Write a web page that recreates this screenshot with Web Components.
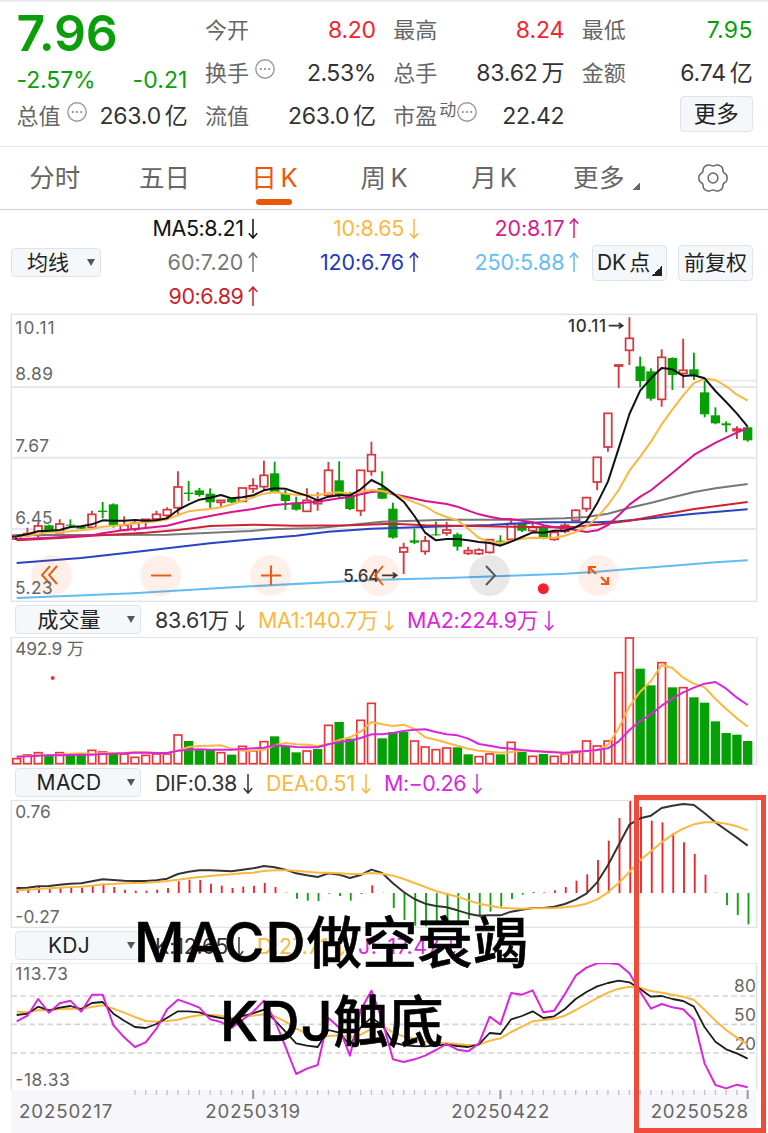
<!DOCTYPE html>
<html lang="zh-CN">
<head>
<meta charset="UTF-8">
<title>日K</title>
<style>
    body {
        margin: 0;
        width: 768px;
        height: 1133px;
        overflow: hidden;
        background: #fff;
        color: #333;
        font-family: Inter, "Noto Sans CJK SC", sans-serif;
    }
</style>
</head>
<body>
<stock-page></stock-page>

<script>
// ---------- helpers ----------
class BaseElement extends HTMLElement {
    connectedCallback() {
        if (this.shadowRoot) return;
        this.attachShadow({ mode: 'open' });
        this.shadowRoot.innerHTML = this.render();
        this.ready();
    }
    attr(name, fallback = '') {
        return this.getAttribute(name) || fallback;
    }
    ready() {}
}

// Text that is tracked in or out until it takes up "w" pixels
class FitText extends BaseElement {
    render() {
        return `<style>
            :host { display: inline-block; white-space: pre; }
            span { display: inline-block; word-spacing: -2.5px; }
        </style><span><slot></slot></span>`;
    }
    ready() {
        const span = this.shadowRoot.querySelector('span');
        const gap = (Number(this.attr('w')) - span.getBoundingClientRect().width) / this.textContent.length;
        span.style.letterSpacing = gap.toFixed(3) + 'px';
    }
}
customElements.define('fit-text', FitText);

class TrendArrow extends BaseElement {
    render() {
        const flip = this.attr('dir') === 'up' ? 'transform="rotate(180 5 10.5)"' : '';
        return `<style>
            :host { display: inline-block; width: 10px; height: 21px; }
            svg { display: block; }
        </style>
        <svg width="10" height="21"><path ${flip} d="M5 1V20M.8 15.2L5 20L9.2 15.2" fill="none" stroke="currentColor" stroke-width="1.5"/></svg>`;
    }
}
customElements.define('trend-arrow', TrendArrow);

// value + arrow in one colour
class TrendValue extends BaseElement {
    render() {
        return `<style>
            :host { display: flex; align-items: center; font-size: 21.5px; line-height: 33px; white-space: nowrap; }
            trend-arrow { margin-left: var(--arrow-gap, 4.5px); }
        </style>
        <fit-text w="${this.attr('w')}">${this.attr('text')}</fit-text><trend-arrow dir="${this.attr('dir')}"></trend-arrow>`;
    }
}
customElements.define('trend-value', TrendValue);

class MoreDots extends BaseElement {
    render() {
        return `<style>:host { display: inline-block; width: 20px; height: 20px; } svg { display: block; }</style>
        <svg width="20" height="20"><circle cx="10" cy="10" r="9.2" fill="none" stroke="#999" stroke-width="1.4"/>
        <g fill="#888"><circle cx="5.8" cy="10" r="1.1"/><circle cx="10" cy="10" r="1.1"/><circle cx="14.2" cy="10" r="1.1"/></g></svg>`;
    }
}
customElements.define('more-dots', MoreDots);

// ---------- header ----------
class QuoteCell extends BaseElement {
    render() {
        return `<style>
            :host { display: flex; height: 43px; line-height: 43px; font-size: 22px; justify-content: space-between; white-space: nowrap; }
            .label { display: flex; color: #666; }
            .value { font-size: 23px; color: #333; }
            :host([tone="up"]) .value { color: #f5222d; }
            :host([tone="down"]) .value { color: #0a9f0a; }
            more-dots { margin: 7px 0 0 6px; }
            small { font-size: 17px; line-height: 31px; margin-left: 2px; }
            small + more-dots { margin-left: 1px; }
        </style>
        <span class="label">${this.attr('label')}${this.hasAttribute('sup') ? `<small>${this.attr('sup')}</small>` : ''}${this.hasAttribute('dots') ? '<more-dots></more-dots>' : ''}</span>
        <fit-text class="value" w="${this.attr('w')}">${this.attr('value')}</fit-text>`;
    }
}
customElements.define('quote-cell', QuoteCell);

class StockQuote extends BaseElement {
    render() {
        return `<style>
            :host {
                display: grid;
                grid-template-columns: repeat(4, 171px);
                column-gap: 17.4px;
                box-sizing: border-box;
                height: 147px;
                padding: 7px 0 0 16.5px;
                border-top: 2px solid #ebebeb;
                border-bottom: 1px solid #e8e8e8;
            }
            .price { height: 51px; line-height: 49px; font-size: 50px; font-weight: 600; }
            .change { display: flex; justify-content: space-between; height: 35px; line-height: 41px; font-size: 23px; }
            .main { color: #0a9f0a; }
            .more {
                float: right;
                box-sizing: border-box;
                width: 73px; height: 36px; line-height: 34px;
                margin-top: 1px;
                border: 1px solid #e0e4ea; border-radius: 4px;
                background: #f5f8fa;
                color: #222; font-size: 22.5px; text-align: center;
            }
        </style>
        <div class="main">
            <div class="price"><fit-text w="101">7.96</fit-text></div>
            <div class="change"><fit-text w="79">-2.57%</fit-text><fit-text w="55">-0.21</fit-text></div>
            <quote-cell label="总值" dots value="263.0 亿" w="88"></quote-cell>
        </div>
        <div>
            <quote-cell label="今开" value="8.20" w="48" tone="up"></quote-cell>
            <quote-cell label="换手" dots value="2.53%" w="69"></quote-cell>
            <quote-cell label="流值" value="263.0 亿" w="88"></quote-cell>
        </div>
        <div>
            <quote-cell label="最高" value="8.24" w="48.5" tone="up"></quote-cell>
            <quote-cell label="总手" value="83.62 万" w="88"></quote-cell>
            <quote-cell label="市盈" sup="动" dots value="22.42" w="62"></quote-cell>
        </div>
        <div>
            <quote-cell label="最低" value="7.95" w="46" tone="down"></quote-cell>
            <quote-cell label="金额" value="6.74 亿" w="72.5"></quote-cell>
            <div class="more">更多</div>
        </div>`;
    }
}
customElements.define('stock-quote', StockQuote);

// ---------- period tabs ----------
class PeriodTabs extends BaseElement {
    // six wide lobes with narrow dips between them
    gear() {
        let d = '';
        for (let a = 0; a < 360; a += 5) {
            const t = a * Math.PI / 180;
            const r = 14.1 - 2.2 * ((1 - Math.cos(6 * t)) / 2) ** 2;
            d += (a ? 'L' : 'M') + (15 + r * Math.cos(t)).toFixed(2) + ' ' + (15 + r * Math.sin(t)).toFixed(2);
        }
        return `<svg width="30" height="30" fill="none" stroke="#666" stroke-width="1.5"><path d="${d}Z"/><circle cx="15" cy="15" r="4.9"/></svg>`;
    }
    render() {
        return `<style>
            :host { display: flex; box-sizing: border-box; height: 63px; border-bottom: 1px solid #cfd1da; color: #666; font-size: 25.5px; line-height: 62px; }
            .tab { flex: 1; display: flex; flex-direction: column; align-items: center; height: 62px; white-space: pre; }
            .active { color: #f0560a; }
            .active::after { content: ''; width: 36px; height: 6px; margin-top: -10px; border-radius: 3px; background: #ec560a; flex: none; }
            .more { flex-direction: row; justify-content: center; }
            .more fit-text { margin-left: 6px; }
            .more i { width: 7px; height: 7px; margin: 17px 0 0 8px; background: linear-gradient(135deg, transparent 50%, #666 50%); }
            .gear { justify-content: center; }
            .gear svg { margin-left: -1px; }
        </style>
        <div class="tab"><fit-text w="51">分时</fit-text></div>
        <div class="tab"><fit-text w="51">五日</fit-text></div>
        <div class="tab active"><fit-text w="46">日 K</fit-text></div>
        <div class="tab"><fit-text w="47">周 K</fit-text></div>
        <div class="tab"><fit-text w="45">月 K</fit-text></div>
        <div class="tab more"><fit-text w="52">更多</fit-text><i></i></div>
        <div class="tab gear">${this.gear()}</div>`;
    }
}
customElements.define('period-tabs', PeriodTabs);

// ---------- moving-average legend ----------
class AverageLegend extends BaseElement {
    render() {
        return `<style>
            :host { display: flex; box-sizing: border-box; height: 100px; padding: 2px 15px 0 11px; }
            .box { box-sizing: border-box; border: 1px solid #e0e4ea; border-radius: 4px; background: #f5f8fa; color: #222; font-size: 21px; }
            .pick { display: flex; align-items: center; justify-content: space-between; width: 90px; height: 29px; margin-top: 36px; padding: 0 5px 0 15px; line-height: 26px; }
            .pick i { border: 4px solid transparent; border-top: 7px solid #555; border-bottom: 0; }
            .grid { display: grid; grid-template-columns: repeat(3, 160.5px); grid-auto-rows: 33.8px; width: 481.5px; margin-left: -3.5px; }
            trend-value { justify-content: flex-end; }
            .tools { display: flex; gap: 11px; margin: 33px 0 0 auto; }
            .tools .box { display: flex; align-items: center; justify-content: center; width: 75px; height: 36px; line-height: 34px; }
            .tools i { align-self: flex-end; width: 10px; height: 10px; margin: 0 0 4px 2px; background: linear-gradient(135deg, transparent 50%, #222 50%); }
        </style>
        <div class="box pick"><fit-text w="42">均线</fit-text><i></i></div>
        <div class="grid">
            <trend-value style="color:#111" text="MA5:8.21" w="91" dir="down"></trend-value>
            <trend-value style="color:#fbb840" text="10:8.65" w="71" dir="down"></trend-value>
            <trend-value style="color:#d91a8c" text="20:8.17" w="70" dir="up"></trend-value>
            <trend-value style="color:#777" text="60:7.20" w="76" dir="up"></trend-value>
            <trend-value style="color:#2238c0" text="120:6.76" w="84" dir="up"></trend-value>
            <trend-value style="color:#66bdf5" text="250:5.88" w="90" dir="up"></trend-value>
            <trend-value style="color:#cb1f2c" text="90:6.89" w="75" dir="up"></trend-value>
        </div>
        <div class="tools">
            <div class="box"><fit-text w="53">DK 点</fit-text><i></i></div>
            <div class="box"><fit-text w="63">前复权</fit-text></div>
        </div>`;
    }
}
customElements.define('average-legend', AverageLegend);

// ---------- indicator bar above each sub chart ----------
class IndicatorBar extends BaseElement {
    render() {
        return `<style>
            :host { display: flex; box-sizing: border-box; height: 35px; padding: 3px 0 0 15px; }
            .pick { box-sizing: border-box; display: flex; align-items: center; justify-content: center; position: relative; width: 126px; height: 29px; padding-right: 18px; border: 1px solid #e0e4ea; border-radius: 4px; background: #f5f8fa; color: #222; font-size: 21px; line-height: 27px; }
            i { position: absolute; right: 5px; top: 10px; border: 4px solid transparent; border-top: 7px solid #555; border-bottom: 0; }
            .values { display: flex; align-items: center; margin-left: 14px; height: 30px; }
            ::slotted(trend-value) { margin-right: 13px; --arrow-gap: 6px; }
        </style>
        <div class="pick"><fit-text w="${this.attr('w')}">${this.attr('name')}</fit-text><i></i></div>
        <div class="values"><slot></slot></div>`;
    }
}
customElements.define('indicator-bar', IndicatorBar);

// ---------- charts: drawn in thirds of a pixel, one candle every 32.25 units ----------
const PITCH = 32.25;
const LEFT = 50;
const RED = '#d4383f';
const GREEN = '#05a005';
const BLACK = '#1c1c1c';
const YELLOW = '#fbb840';
const PURPLE = '#d926dc';
const cx = i => LEFT + i * PITCH;
const curve = (points, color, w = 6) =>
    `<polyline points="${points}" fill="none" stroke="${color}" stroke-width="${w}" stroke-linejoin="round"/>`;
const series = (ys, color, w) => curve(ys.map((y, i) => cx(i).toFixed(1) + ',' + y).join(' '), color, w);
const label = (x, y, w, text, size = 52, fill = '#666', weight = 400) =>
    `<text x="${x}" y="${y}" font-size="${size}" font-weight="${weight}" fill="${fill}" textLength="${w}">${text}</text>`;

class ChartPane extends BaseElement {
    box = '0 0 2304 384';
    render() {
        const h = this.box.split(' ')[3] / 3;
        return `<style>
            :host { display: block; position: relative; height: ${h}px; }
            svg { display: block; }
            text { font-family: Inter, "Noto Sans CJK SC", sans-serif; }
        </style><svg width="768" height="${h}" viewBox="${this.box}">${this.draw()}</svg>${this.extra()}`;
    }
    extra() { return ''; }
}

// colour, high, body top, body bottom, low
const CANDLES = `r675,676,687,688 r653,671,676,680 r640,648,676,686 g644,646,664,666 r628,642,668,669 g628,644,647,652
g648,650,656,658 r602,613,652,655 g576,602,606,625 g580,583,645,653 r619,646,661,664 r634,640,658,664
r627,628,636,654 r602,613,627,635 r592,599,616,628 r484,531,593,619 g513,548,552,573 g534,541,555,560
g535,551,577,594 r570,571,577,590 g564,565,577,580 r533,534,574,575 r505,527,536,549 r452,496,530,539
g455,490,548,550 g540,551,573,600 g560,578,599,602 r535,571,604,605 r547,573,581,602 r456,481,556,558
g454,511,556,563 g546,556,597,600 r480,481,602,618 r395,434,484,497 g484,534,566,567 g578,596,683,686
r698,713,726,792 g656,691,698,702 r678,693,724,734 g635,673,676,677 r635,660,669,677 g668,673,710,722
r710,722,730,735 r715,720,731,735 r688,689,727,731 g676,692,700,707 r625,641,688,690 g640,642,662,666
r640,652,662,664 g649,651,685,688 r665,667,688,692 r640,646,664,670 r598,601,631,632 r560,563,596,605
r441,442,516,541 r309,310,411,425 r164,165,168,234 r22,85,121,165 g140,169,213,232 g175,184,266,272
r118,142,268,290 g142,144,195,240 r86,181,190,234 g128,178,196,210 g213,247,313,322 g292,316,340,343
g334,340,346,367 r349,357,362,387 g350,352,391,395`.split(/\s+/).map(c => [c[0], ...c.slice(1).split(',').map(Number)]);

const MA5 = [679,673,664,662,660,651,649,643,631,632,632,630,632,631,625,600,583,569,563,555,565,562,556,541,535,536,547,557,571,560,556,556,538,510,526,550,575,618,668,691,687,687,691,696,699,707,695,681,667,668,662,662,652,633,580,515,415,312,242,205,174,178,198,196,205,243,276,311,350];
const MA10 = [680,677,672,666,667,664,661,657,650,648,644,640,637,634,628,615,604,600,597,592,583,573,562,551,546,551,554,556,556,549,547,551,545,540,543,551,564,577,589,609,621,631,656,684,696,698,692,686,683,684,683,677,666,650,622,585,540,482,440,395,343,298,256,219,206,210,229,254,272];

class PriceChart extends ChartPane {
    box = '0 0 2304 876';
    draw() {
        const grid = [231, 443, 657].map(y => `<path d="M34 ${y}H2270" stroke="#e6e8f1" stroke-width="6"/>`).join('');
        const candles = CANDLES.map(([c, hi, top, bottom, lo], i) => {
            const x = cx(i);
            if (c === 'g') {
                return `<path d="M${x} ${hi}V${lo}" stroke="${GREEN}" stroke-width="5.6"/><rect x="${x - 14}" y="${top}" width="28" height="${bottom - top}" fill="${GREEN}"/>`;
            }
            return `<path d="M${x} ${hi}V${top}M${x} ${bottom}V${lo}" stroke="${RED}" stroke-width="5.6"/><rect x="${x - 11.5}" y="${top}" width="23" height="${bottom - top}" fill="#fff" stroke="${RED}" stroke-width="5.2"/>`;
        }).join('');
        return `
            <rect x="34" y="13" width="2236" height="861" fill="none" stroke="#e0e2e8" stroke-width="4"/>
            ${grid}<path d="M2095 212H2270" stroke="#e6e8f1" stroke-width="5"/>
            ${candles}
            ${curve('50,864 400,850 750,829 1114,810 1340,804 1530,797 1695,791 1792,785 1889,777 2018,767 2147,757 2243,751', '#62bcf4')}
            ${curve('50,759 243,744 437,722 630,700 760,688 888,677 985,665 1114,656 1340,649 1469,645 1534,641 1631,637 1792,637 1857,634 1954,625 2018,618 2083,611 2243,598', '#2a42c4')}
            ${curve('36,680 50,675 276,675 500,674 600,670 750,663 810,658 953,654 1050,645 1147,635 1244,632 1340,629 1534,629 1694,625 1759,621 1824,611 1889,593 1954,578 2018,562 2083,546 2147,535 2243,522', '#777')}
            ${curve('50,691 179,684 276,677 437,668 534,660 630,648 759,644 888,647 1050,646 1179,641 1276,646 1405,648 1534,650 1654,652 1727,650 1792,644 1889,632 1986,614 2083,597 2243,576', '#cf2230')}
            ${curve('50,688 147,683 276,676 308,670 372,660 437,654 501,647 566,631 630,618 695,606 759,597 792,590 824,585 888,580 953,575 1017,565 1050,561 1082,553 1114,546 1147,544 1179,553 1211,559 1276,573 1340,582 1372,590 1405,602 1437,613 1469,620 1502,626 1534,628 1598,637 1631,646 1663,652 1727,660 1759,666 1792,661 1824,645 1857,615 1889,583 1921,560 1954,540 2018,488 2083,434 2147,398 2212,367 2243,354', '#d9148f')}
            ${series(MA10, YELLOW)}
            ${series(MA5, '#111')}<path d="M36 680H48V690" stroke="#222" stroke-width="5" fill="none"/>
            ${label(46, 72, 118, '10.11')}${label(46, 211, 113, '8.89')}${label(46, 427, 101, '7.67')}${label(46, 641, 112, '6.45')}
            ${label(1704, 67, 114, '10.11', 51, '#333', 500)}
            <path d="M1826 47H1868M1856 39L1868 47L1856 55" fill="none" stroke="#333" stroke-width="5"/>
            ${label(1030, 817, 108, '5.64', 51, '#333', 500)}
            <path d="M1146 796H1190M1178 788L1190 796L1178 804" fill="none" stroke="#333" stroke-width="5"/>
            <circle cx="1630" cy="836" r="16.5" fill="#f5222d"/>`;
    }
    extra() {
        return `<chart-controls></chart-controls>`;
    }
}
customElements.define('price-chart', PriceChart);

// Round pan / zoom buttons floating over the candles
class ChartControls extends BaseElement {
    render() {
        const icons = [
            'M19 11L11 20L19 29M26 11L18 20L26 29',
            'M11 20.5H31',
            'M11 20.5H31M21 10.5V30.5',
            'M24 11L16 20.5L24 30',
            'M17 11L26 20.5L17 30',
            'M12 19V12H19M12 12L19 19M31 22V29H24M31 29L24 22',
        ];
        return `<style>
            :host { position: absolute; left: 31px; top: 244.5px; width: 588px; display: flex; justify-content: space-between; }
            b { width: 41px; height: 41px; border-radius: 50%; background: rgba(240, 86, 10, .09); }
            b:nth-of-type(5) { background: rgba(0, 0, 0, .09); }
            svg { display: block; fill: none; stroke: #ec5a10; stroke-width: 1.9; }
            b:nth-of-type(5) svg { stroke: #555; }
            b:nth-of-type(6) svg { stroke-width: 2.2; margin-left: -1px; }
            span { position: absolute; left: -16px; top: 21.5px; width: 40px; font-size: 17.3px; line-height: 24px; color: #666; }
        </style>
        ${icons.map(d => `<b><svg width="41" height="41"><path d="${d}"/></svg></b>`).join('')}
        <span><fit-text w="38">5.23</fit-text></span>`;
    }
}
customElements.define('chart-controls', ChartControls);

const VOLUME = 'r475 r464 r457 g468 r457 g466 g466 r450 r455 g459 r461 r471 r465 r461 r461 r404 g424 g451 g451 r457 g465 r438 r452 r424 g410 g440 g458 r452 g448 r375 g367 g417 r360 r309 g416 g397 g397 r422 r440 r448 r443 g443 g464 r469 r461 g464 r426 g457 r468 g463 r468 r462 r453 r422 r437 r422 r217 r113 g207 g257 r187 g263 r262 g293 g309 g365 g400 g405 g424'.split(' ');

class VolumeChart extends ChartPane {
    box = '0 111 2304 384';
    draw() {
        const bars = VOLUME.map((v, i) => {
            const y = Number(v.slice(1));
            return v[0] === 'g'
                ? `<rect x="${cx(i) - 14}" y="${y - 1}" width="28" height="${495 - y}" fill="${GREEN}"/>`
                : `<rect x="${cx(i) - 11.5}" y="${y + 1}" width="23" height="${490 - y}" fill="#fff" stroke="#ec3438" stroke-width="5"/>`;
        }).join('');
        return `
            <path d="M34 493V112H2270V493Z" fill="none" stroke="#e0e2e8" stroke-width="4"/>
            ${bars}
            ${series([470,468,466,466,464,461,460,462,460,459,459,456,457,459,459,452,441,438,437,436,446,452,452,449,436,429,433,434,438,433,420,412,395,366,373,378,374,387,412,419,428,437,446,452,455,458,456,452,452,454,455,461,458,453,450,435,385,320,275,243,195,204,233,251,262,297,327,355,380], YELLOW)}
            ${series([470,469,467,466,466,465,464,464,462,461,460,458,458,459,459,452,449,448,449,449,449,447,445,443,436,438,441,442,442,433,426,422,414,403,403,399,393,389,388,396,403,406,416,432,437,443,446,450,453,455,457,458,456,453,450,445,424,390,363,343,317,296,277,263,251,246,266,293,315], PURPLE)}
            ${label(46, 164, 206, '492.9 万')}
            <circle cx="158" cy="234" r="6" fill="#f5332d"/>`;
    }
}
customElements.define('volume-chart', VolumeChart);

const MACD_BARS = [293,297,288,296,293,291,293,287,285,291,299,302,302,299,294,274,269,270,281,287,294,290,287,279,291,308,326,332,333,311,318,332,312,286,308,354,390,407,409,405,400,395,387,380,365,350,327,314,306,307,301,291,272,253,210,152,84,33,50,92,97,129,157,192,254,308,346,375,403];

class MacdChart extends ChartPane {
    box = '0 30 2304 384';
    draw() {
        // the bars sit a touch right of the candle centre
        const bars = MACD_BARS.map((y, i) =>
            `<path d="M${cx(i) + 2.5} 309V${y}" stroke="${y < 309 ? '#e8262b' : '#0fa00f'}" stroke-width="5.6"/>`).join('');
        return `
            <rect x="34" y="31" width="2236" height="381" fill="none" stroke="#e0e4e8" stroke-width="4"/>
            ${bars}
            ${series([294,293,289,288,284,281,280,274,268,270,272,273,273,271,266,252,245,241,241,242,244,239,235,228,232,239,250,256,261,250,254,264,255,239,249,280,306,327,341,348,352,361,371,377,376,376,365,359,354,354,350,342,329,311,277,226,165,104,85,77,54,47,42,45,70,97,120,143,167], '#333')}
            ${series([301,299,297,295,293,291,290,287,283,282,280,279,278,276,273,269,265,261,258,255,253,250,248,243,241,241,242,245,248,248,250,252,252,249,251,257,267,279,291,303,312,320,331,341,347,353,355,356,355,355,354,352,348,341,328,307,279,246,211,184,157,134,116,103,97,97,101,109,121], YELLOW)}
            ${label(46, 83, 106, '0.76')}${label(46, 399, 133, '-0.27')}`;
    }
}
customElements.define('macd-chart', MacdChart);

class KdjChart extends ChartPane {
    box = '0 519 2304 381';
    draw() {
        const grid = [618, 703, 789].map(y => `<path d="M34 ${y}H2270" stroke="#d4d4d4" stroke-width="5" stroke-dasharray="17 10"/>`).join('');
        return `
            <path d="M34 900V519H2270V900" fill="none" stroke="#e0e4e8" stroke-width="4"/>
            ${grid}
            ${label(2202, 605, 66, '80')}${label(2202, 692, 66, '50')}${label(2204, 779, 64, '20')}
            ${series([665,667,661,661,657,656,656,651,646,656,668,681,693,695,693,689,681,676,674,677,683,680,677,673,679,695,716,731,742,738,736,742,734,717,708,727,739,746,755,758,760,762,765,764,752,745,726,710,694,690,686,677,660,642,624,608,596,590,594,603,608,614,620,630,660,692,720,743,764], YELLOW)}
            ${series([675,671,650,661,653,648,657,639,636,671,692,711,714,702,683,664,664,667,678,684,688,678,670,659,690,725,760,767,771,720,728,765,712,683,705,758,765,768,769,766,764,768,771,763,729,732,688,678,664,684,679,657,627,606,589,579,572,577,597,620,618,627,633,650,712,755,778,790,806], BLACK, 5.4)}
            ${series([694,677,627,668,640,632,665,614,614,706,742,771,757,716,658,629,640,653,688,696,714,690,665,632,690,770,852,836,825,684,713,797,660,602,690,808,816,808,797,780,762,779,784,760,680,703,609,614,601,667,662,612,557,533,520,519,523,550,605,656,642,652,658,690,821,885,895,884,892], PURPLE)}
            ${label(46, 571, 158, '113.73')}${label(46, 889, 163, '-18.33')}`;
    }
}
customElements.define('kdj-chart', KdjChart);

class DateAxis extends ChartPane {
    box = '0 900 2304 129';
    draw() {
        let ticks = '';
        for (let i = 11; i < 69; i++) {
            const major = i === 22 || i === 45 || i === 68;
            ticks += `<path d="M${cx(i)} 900V${major ? 927 : 915}" stroke="${major ? '#999' : '#c2c2c6'}" stroke-width="${major ? 6 : 4}"/>`;
        }
        return `<rect x="34" y="900" width="2236" height="129" fill="#f7f7fb"/>${ticks}
            ${label(57, 985, 280, '20250217', 56)}${label(616, 985, 284, '20250319', 56)}
            ${label(1354, 985, 294, '20250422', 56)}${label(1952, 985, 292, '20250528', 56)}`;
    }
}
customElements.define('date-axis', DateAxis);

// Caption text written over the charts
class ChartNote extends BaseElement {
    render() {
        return `<style>
            :host { display: block; position: absolute; left: 130px; top: 905px; }
            svg { display: block; }
            text { font-family: Inter, "Noto Sans CJK SC", sans-serif; font-size: 166px; font-weight: 500; fill: #000; stroke: #000; stroke-width: 2px; }
        </style>
        <svg width="420" height="180" viewBox="0 0 1260 540">
            <text x="12" y="172" textLength="514">MACD</text><text x="530" y="175" textLength="664">做空衰竭</text>
            <text x="270" y="409" textLength="338">KDJ</text><text x="610" y="412" textLength="330">触底</text>
        </svg>`;
    }
}
customElements.define('chart-note', ChartNote);

// ---------- page ----------
class StockPage extends BaseElement {
    render() {
        return `<style>
            :host { display: block; position: relative; width: 768px; height: 1133px; overflow: hidden; }
            .frame { position: absolute; left: 634px; top: 795px; width: 132px; height: 338px; box-sizing: border-box; border: 5px solid #ee4b3b; }
            .k { color: #333; } .y { color: #fbb840; } .p { color: #d926dc; }
        </style>
        <stock-quote></stock-quote>
        <period-tabs></period-tabs>
        <average-legend></average-legend>
        <price-chart></price-chart>
        <indicator-bar name="成交量" w="63">
            <trend-value class="k" text="83.61万" w="74" dir="down"></trend-value>
            <trend-value class="y" text="MA1:140.7万" w="120" dir="down"></trend-value>
            <trend-value class="p" text="MA2:224.9万" w="131" dir="down"></trend-value>
        </indicator-bar>
        <volume-chart></volume-chart>
        <indicator-bar name="MACD" w="65">
            <trend-value class="k" text="DIF:0.38" w="82" dir="down"></trend-value>
            <trend-value class="y" text="DEA:0.51" w="89" dir="down"></trend-value>
            <trend-value class="p" text="M:−0.26" w="82" dir="down"></trend-value>
        </indicator-bar>
        <macd-chart></macd-chart>
        <indicator-bar name="KDJ" w="42">
            <trend-value class="k" text="K:12.65" w="73" dir="down"></trend-value>
            <trend-value class="y" text="D:27.71" w="72" dir="down"></trend-value>
            <trend-value class="p" text="J:-17.47" w="82" dir="down"></trend-value>
        </indicator-bar>
        <kdj-chart></kdj-chart>
        <date-axis></date-axis>
        <chart-note></chart-note>
        <div class="frame"></div>`;
    }
}
customElements.define('stock-page', StockPage);
</script>
</body>
</html>
